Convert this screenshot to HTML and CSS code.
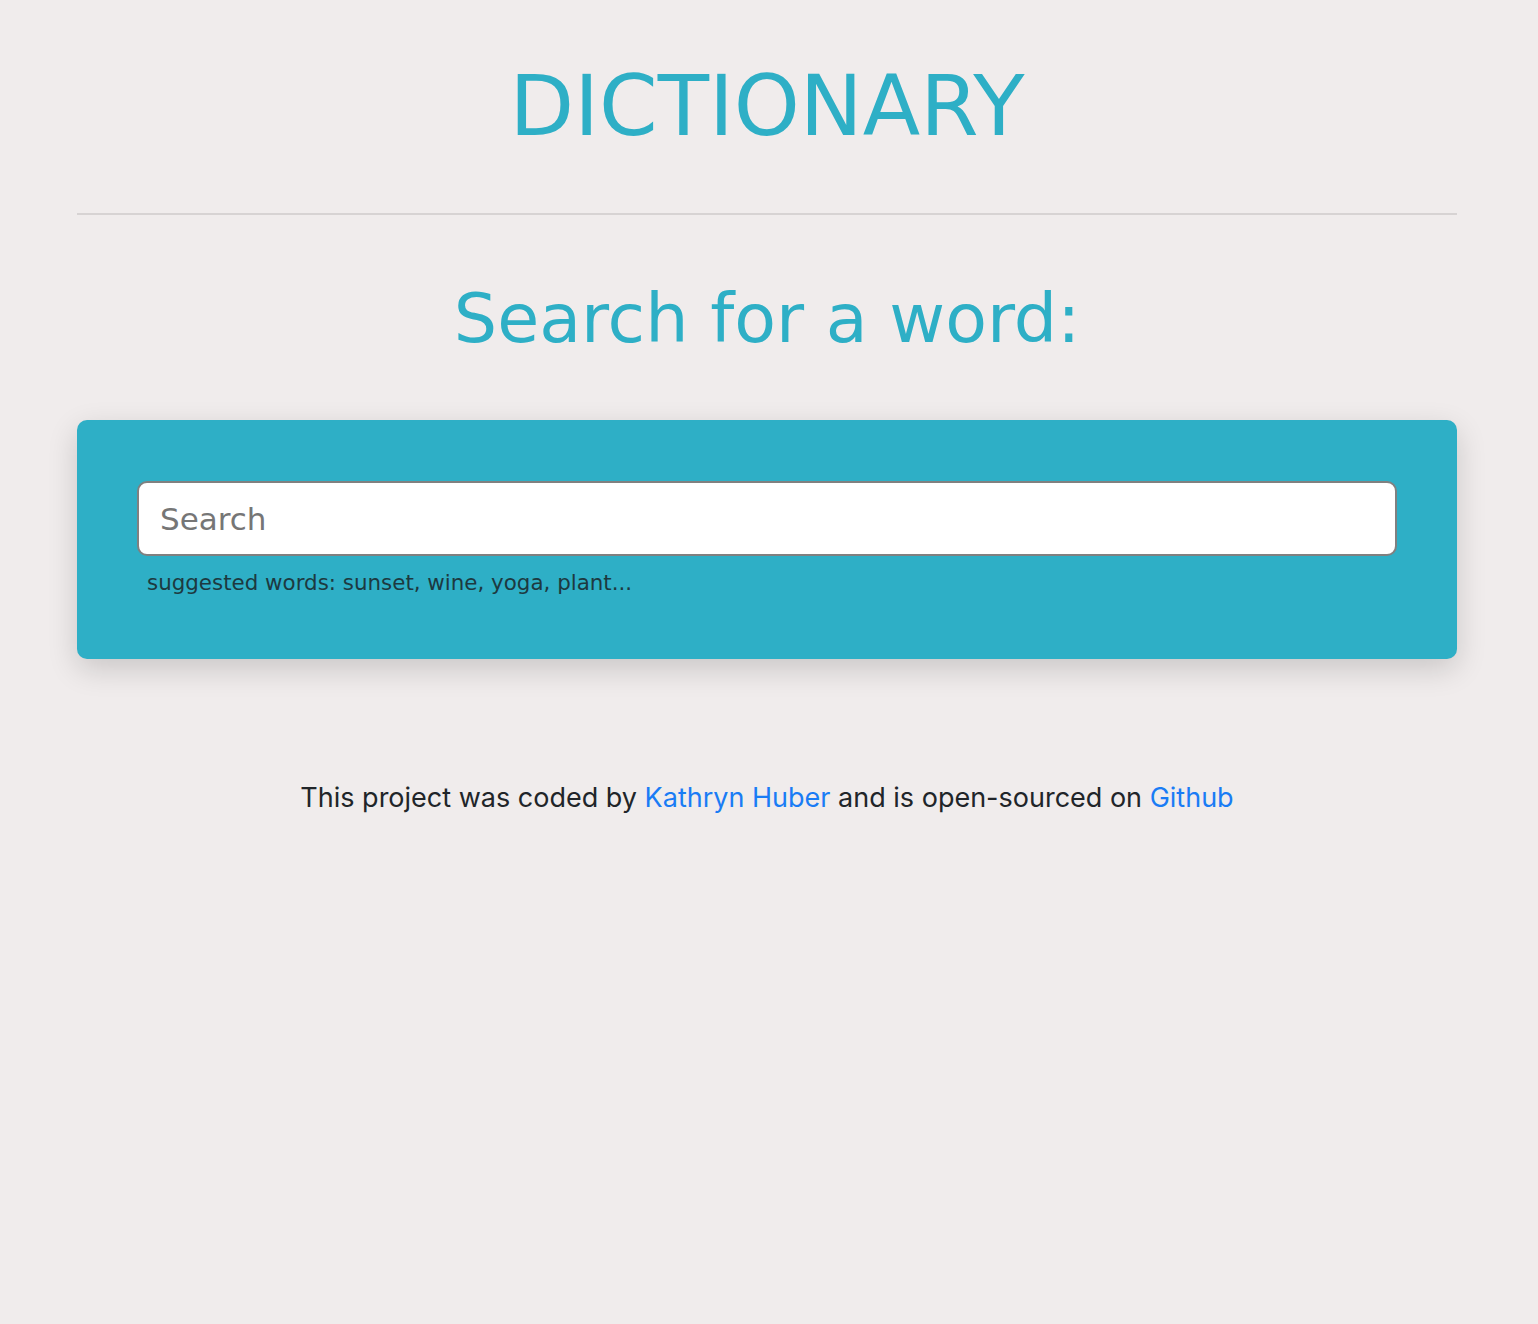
FILE: index.html
```html
<!DOCTYPE html>
<html lang="en">
<head>
<meta charset="utf-8">
<title>Dictionary</title>
<link rel="stylesheet" href="styles.css">
</head>
<body>
<div class="container">
  <header class="header">
    <h1 class="title">DICTIONARY</h1>
  </header>
  <hr class="rule">
  <h2 class="subtitle">Search for a word:</h2>
  <section class="card">
    <form class="search-form">
      <input class="search-input" type="search" placeholder="Search">
    </form>
    <div class="hint">suggested words: sunset, wine, yoga, plant...</div>
  </section>
  <footer class="footer">
    This project was coded by <a href="#">Kathryn Huber</a> and is open-sourced on <a href="#">Github</a>
  </footer>
</div>
</body>
</html>
```

FILE: styles.css
```css
html, body {
  margin: 0;
  padding: 0;
  background: #f0ecec;
}
body {
  font-family: "DejaVu Sans", sans-serif;
  color: #212529;
}
.container {
  width: 1380px;
  margin-left: 77px;
}
.header {
  padding-top: 56px;
}
.title {
  margin: 0;
  text-align: center;
  font-weight: 400;
  font-size: 84px;
  line-height: 100px;
  color: #2eafc6;
}
.rule {
  margin: 57px 0 0;
  border: 0;
  border-top: 2px solid #d7d3d3;
}
.subtitle {
  margin: 64px 0 0;
  text-align: center;
  font-weight: 400;
  font-size: 68.3px;
  line-height: 80px;
  color: #2eafc6;
}
.card {
  margin-top: 61px;
  background: #2eafc6;
  border-radius: 10px;
  padding: 61px 60px 62px;
  box-shadow: 0 10px 30px rgba(0, 0, 0, 0.16);
}
.search-form {
  margin: 0;
}
.search-input {
  display: block;
  box-sizing: border-box;
  width: 100%;
  height: 75px;
  margin: 0;
  padding: 0 21px;
  border: 2px solid #808080;
  border-radius: 10px;
  background: #fff;
  font-family: "DejaVu Sans", sans-serif;
  font-size: 31px;
  color: #333;
  outline: none;
  -webkit-appearance: none;
  appearance: none;
}
.search-input::placeholder {
  color: #767676;
}
.hint {
  margin-top: 13px;
  padding-left: 10px;
  font-size: 21.4px;
  line-height: 28px;
  color: #1d3940;
}
.footer {
  margin-top: 124px;
  text-align: center;
  font-family: Inter, "Liberation Sans", sans-serif;
  font-size: 27px;
  line-height: 30px;
  color: #212529;
}
.footer a {
  color: #1a7cf5;
  text-decoration: none;
}
```
